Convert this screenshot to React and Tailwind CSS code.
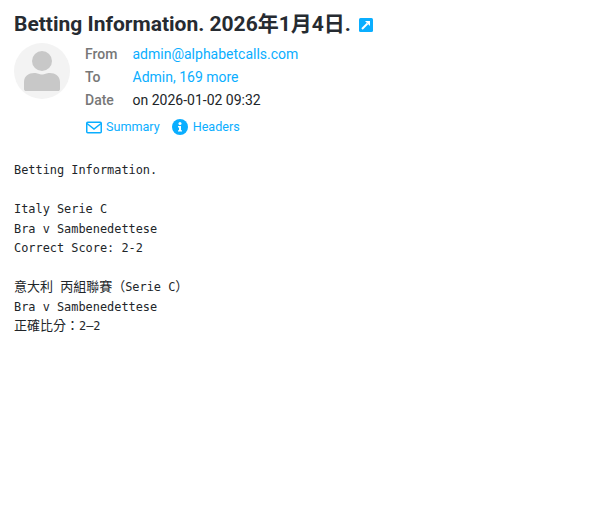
import React from 'react';

const Row = ({ label, children }) => (
  <div className="flex h-[23px] items-center">
    <span className="w-[47.5px] font-medium text-[#777777]">{label}</span>
    {children}
  </div>
);

const Cjk = ({ children }) => (
  <span className="font-['Noto_Sans_CJK_TC',sans-serif] text-[13px] leading-[0]">{children}</span>
);

const App = () => {
  return (
    <div className="min-h-[515px] bg-white px-3.5 pt-3 font-['Roboto',sans-serif] text-sm text-[#212529]">
      {/* Subject */}
      <div className="flex h-6 items-center">
        <h1 className="font-['Roboto','Noto_Sans_CJK_SC',sans-serif] text-[21px] leading-6 font-bold text-[#262b31]">
          Betting Information. 2026年1月4日.
        </h1>
        <svg className="ml-2 mt-0.5" width="14" height="14" viewBox="0 0 14 14">
          <rect width="14" height="14" rx="1.5" fill="#0aaeff" />
          <path d="M3 11 L8.5 5.5" fill="none" stroke="#fff" strokeWidth="2" />
          <path d="M6 3 H11 V8 Z" fill="#fff" />
        </svg>
      </div>

      {/* Sender info */}
      <div className="mt-1.5 flex">
        <div className="mt-px flex h-14 w-14 shrink-0 items-center justify-center rounded-full bg-[#f3f3f3]">
          <svg width="36" height="40" viewBox="0 0 36 40">
            <circle cx="18" cy="10" r="10" fill="#c8c8c8" />
            <path d="M0 38 V31 C0 25 5 22 10 22 C14 22 15 23.5 18 23.5 C21 23.5 22 22 26 22 C31 22 36 25 36 31 V38 C36 39.5 35 40 34 40 H2 C1 40 0 39.5 0 38 Z" fill="#c8c8c8" />
          </svg>
        </div>
        <div className="ml-[15px]">
          <Row label="From">
            <a className="text-[#0aaeff]">admin@alphabetcalls.com</a>
          </Row>
          <Row label="To">
            <a className="text-[#0aaeff]">Admin, 169 more</a>
          </Row>
          <Row label="Date">
            <span>on 2026-01-02 09:32</span>
          </Row>
          <div className="mt-1 flex h-[23px] items-center text-[12.6px] text-[#0aaeff]">
            <svg className="ml-px mr-1 mt-px" width="16" height="13" viewBox="0 0 16 13">
              <rect x="0.75" y="1.25" width="14.5" height="10.5" rx="1" fill="none" stroke="#0aaeff" strokeWidth="1.5" />
              <path d="M1 2.5 L8 8 L15 2.5" fill="none" stroke="#0aaeff" strokeWidth="1.5" />
            </svg>
            <span>Summary</span>
            <svg className="ml-3 mr-[5px] mt-px" width="16" height="16" viewBox="0 0 16 16">
              <circle cx="8" cy="8" r="8" fill="#0aaeff" />
              <circle cx="8" cy="4.4" r="1.5" fill="#fff" />
              <path d="M6 7 H9 V11.2 H10 V12.6 H6 V11.2 H7 V8.4 H6 Z" fill="#fff" />
            </svg>
            <span>Headers</span>
          </div>
        </div>
      </div>

      {/* Message body */}
      <pre className="mt-[23px] font-['DejaVu_Sans_Mono',monospace] text-[11.9px] leading-[19.5px] text-[#212529]">
        {'Betting Information.\n\nItaly Serie C\nBra v Sambenedettese\nCorrect Score: 2-2\n\n'}
        <Cjk>意大利</Cjk>
        {' '}
        <Cjk>丙組聯賽（</Cjk>
        {'Serie C'}
        <Cjk>）</Cjk>
        {'\nBra v Sambenedettese\n'}
        <Cjk>正確比分：</Cjk>
        {'2–2'}
      </pre>
    </div>
  );
};

export default App;
